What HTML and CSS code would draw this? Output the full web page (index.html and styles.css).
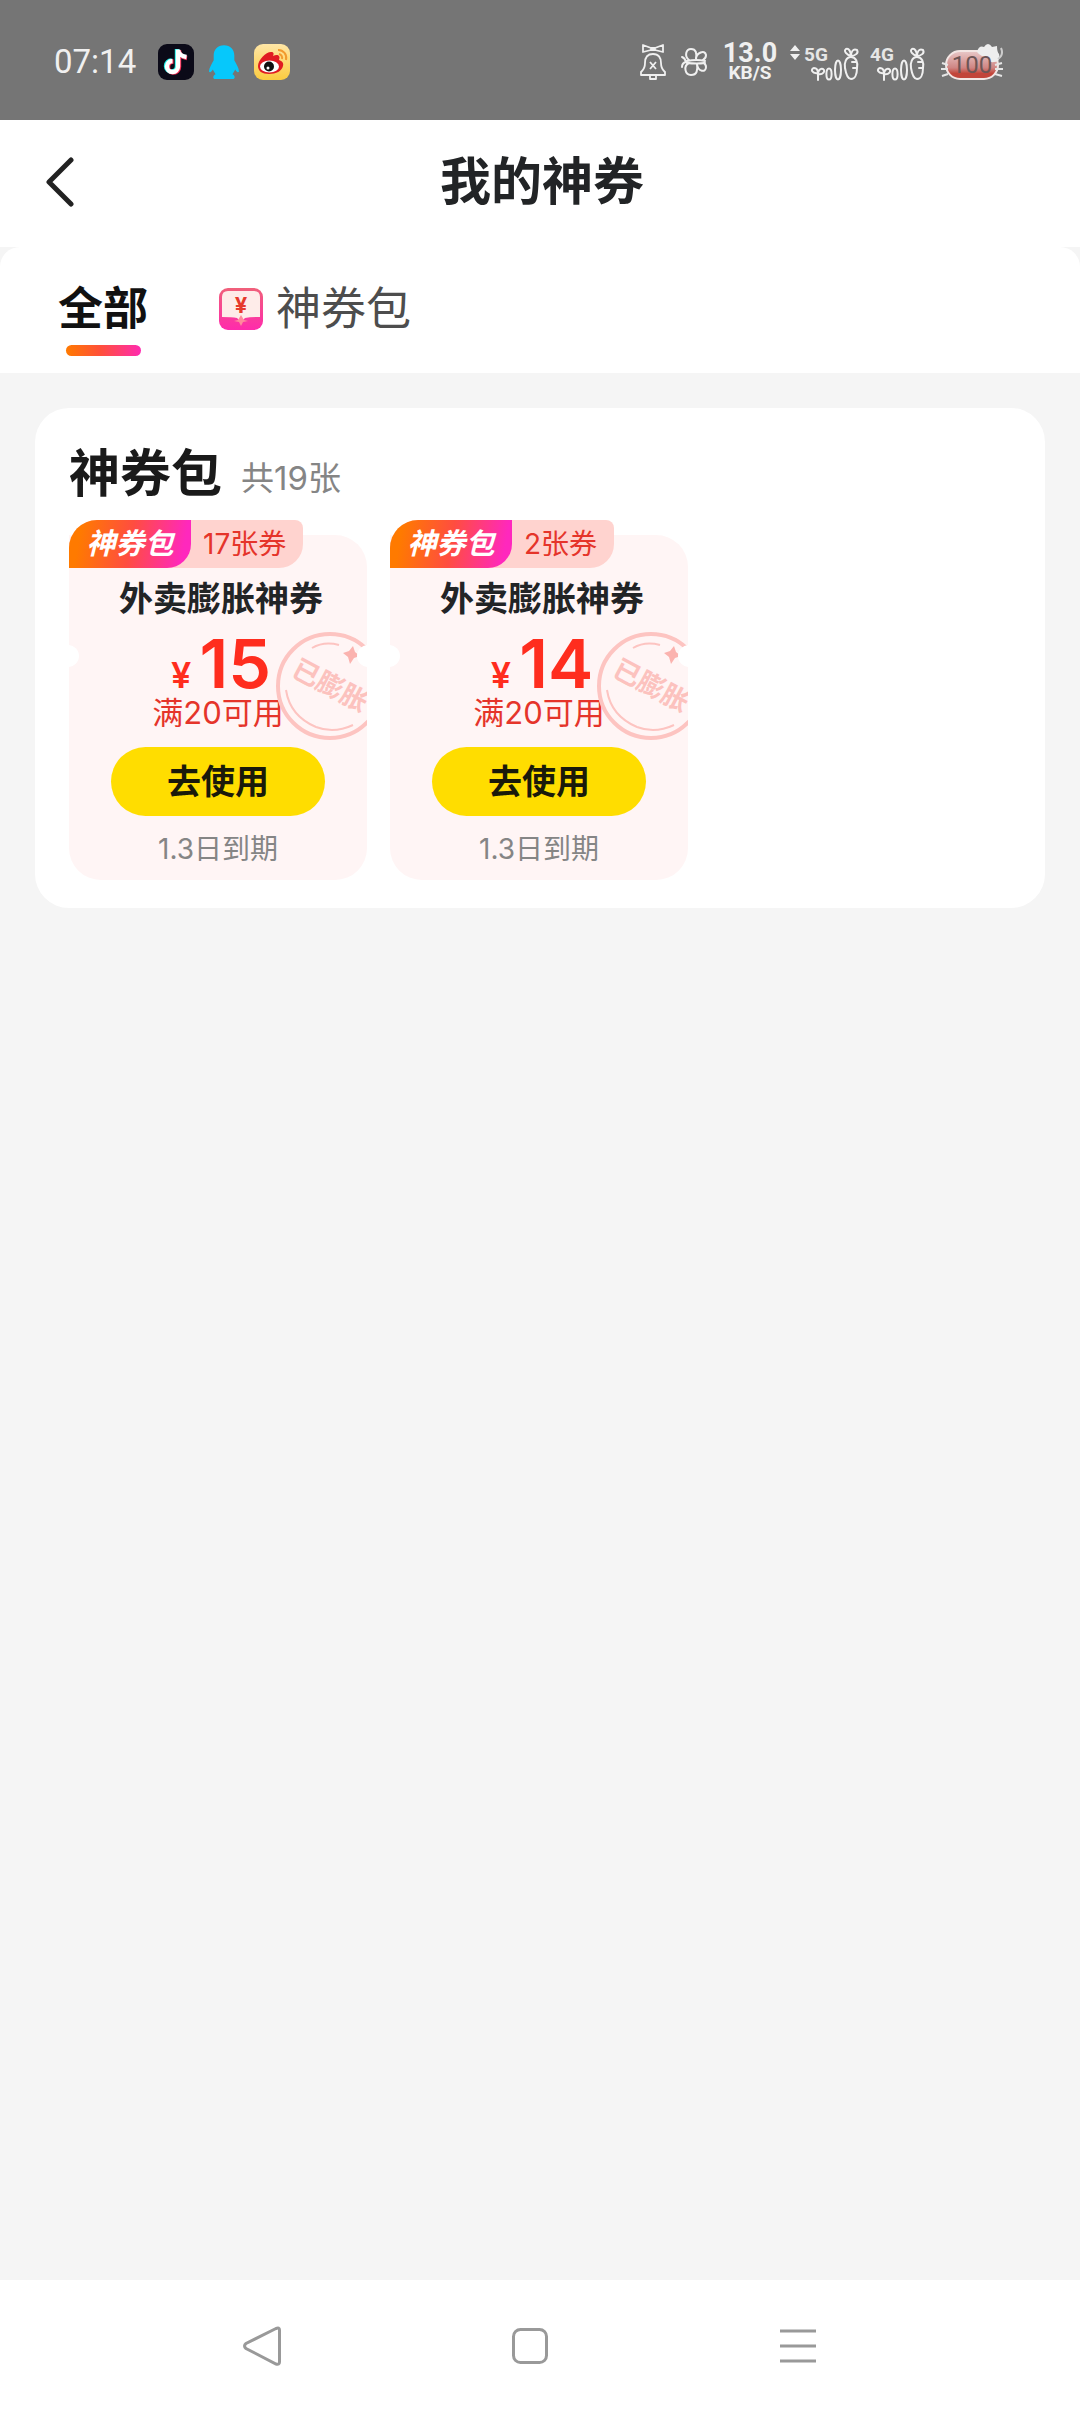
FILE: index.html
```html
<!DOCTYPE html>
<html lang="zh-CN">
<head>
<meta charset="utf-8">
<meta name="viewport" content="width=device-width, initial-scale=1">
<title>我的神券</title>
<link rel="stylesheet" href="styles.css">
</head>
<body>
<svg class="defs" width="0" height="0" aria-hidden="true">
  <defs>
    <g id="signal-bars" fill="none" stroke="#f0f0f0" stroke-width="2" stroke-linecap="round">
      <path d="M7 38V30M7 31c-6 1-8-4-4-5c3 0 4 3 4 6c0-3 2-6 5-5c3 2 0 6-5 5"/>
      <ellipse cx="18" cy="32" rx="2.6" ry="5.6"/>
      <ellipse cx="27" cy="28" rx="3" ry="9.5"/>
      <path d="M40 15c-5 0-7 6-6 11c1 6 3 11 6 11c4 0 6-5 6-11c1-6-1-11-6-11zM41 20h4M42 26h4"/>
      <path d="M40 14c-4-1-8-5-5-7c3-1 5 3 5 7c0-4 2-8 6-6c2 3-2 6-6 6"/>
    </g>
    <symbol id="stamp" viewBox="0 0 108 108">
      <g fill="none" stroke="#fdc4c1">
        <circle cx="54" cy="54" r="52" stroke-width="4"/>
        <path d="M36 16Q48 9 63 13" stroke-width="2"/>
        <path d="M10 58Q14 84 40 95Q58 102 77 93" stroke-width="2"/>
      </g>
      <path d="M77 14l2 6 5 4-6 2-4 6-2-7-5-4 6-2z" fill="#fbb3af"/>
      <text x="54" y="63" text-anchor="middle" transform="rotate(28 54 54)" font-size="27" font-weight="700" fill="#fcc2be">已膨胀</text>
    </symbol>
  </defs>
</svg>

<div class="status">
  <div class="status-left">
    <span class="clock">07:14</span>
    <svg class="app" viewBox="0 0 36 36" role="img" aria-label="抖音">
      <rect width="36" height="36" rx="9" fill="#0b0a18"/>
      <g fill="none" stroke-width="4.4">
        <path d="M19 5v17a5.500 5.500 0 1 1-5.500-5.500M19 6q1 6 8 7" stroke="#25f4ee"/>
        <path d="M21 6v17a5.500 5.500 0 1 1-5.500-5.500M21 7q1 6 8 7" stroke="#fe2c55"/>
        <path d="M20 5.500v17a5.500 5.500 0 1 1-5.500-5.500M20 6q1 6 8.500 7" stroke="#fff"/>
      </g>
    </svg>
    <svg class="qq" viewBox="0 0 32 36" role="img" aria-label="QQ">
      <path d="M16 0C9 0 5 5 5 11v5c-2 4-5 8-5 12c1 2 3 0 4-2l3 5c-3 1-3 5-1 5h20c2 0 2-4-1-5l3-5c1 2 3 4 4 2c0-4-3-8-5-12v-5C27 5 23 0 16 0z" fill="#06c8fb"/>
    </svg>
    <svg class="app" viewBox="0 0 36 36" role="img" aria-label="微博">
      <defs><linearGradient id="wb" x1="0" y1="0" x2="0" y2="1"><stop offset="0" stop-color="#ffe6a6"/><stop offset="1" stop-color="#fbcb3f"/></linearGradient></defs>
      <rect width="36" height="36" rx="9" fill="url(#wb)"/>
      <path d="M4 22c0-6 8-14 13-14c3 0 3 2 2 4c4-2 8-1 6 4c3 1 5 3 4 6c-1 5-7 8-14 8S4 27 4 22z" fill="#e01b22"/>
      <ellipse cx="15.500" cy="22.500" rx="9.500" ry="6" fill="#fff"/>
      <circle cx="15" cy="22.500" r="5" fill="#111"/><circle cx="14" cy="24" r="1.500" fill="#fff"/>
      <path d="M24 6a8 8 0 0 1 8 10M25 10a4 4 0 0 1 3 5" fill="none" stroke="#f29a2e" stroke-width="2"/>
    </svg>
  </div>
  <div class="status-right">
    <svg class="bell" viewBox="0 0 26 36" fill="none" stroke="#f0f0f0" stroke-width="1.800" stroke-linejoin="round" aria-hidden="true">
      <path d="M11 4L3 1v7l8-2h4l8 2V1l-8 3zM11 4v2M15 4v2"/>
      <path d="M13 10c-6 0-8 4-8 9c0 6-2 7-4 9v3h24v-3c-2-2-4-3-4-9c0-5-2-9-8-9z"/>
      <path d="M10 31v4h6v-4M10 18l6 7M16 18l-6 7"/>
    </svg>
    <svg class="fly" viewBox="0 0 26 28" fill="none" stroke="#f0f0f0" stroke-width="2" stroke-linecap="round" aria-hidden="true">
      <path d="M6 13q10-2 18 0M6 15q10 1 18 0M5 14q-1-4-4-5M5 14q-4 1-4 5"/>
      <path d="M8 12C3 8 5 1 10 1c5 0 6 4 5 10C15 5 24 1 25 7c0 3-1 4-3 5M8 15C2 18 4 27 10 27c6 0 7-5 6-11c1 8 9 9 9 3c0-2-1-3-2-4"/>
    </svg>
    <div class="speed"><span class="rate">13.0</span><span class="unit">KB/S</span></div>
    <svg class="sig5" viewBox="0 0 72 40" aria-hidden="true">
      <path d="M7 3l5 6H2zM7 18l5-6H2z" fill="#f0f0f0"/>
      <text class="net" x="16" y="19">5G</text>
      <use href="#signal-bars" x="23"/>
    </svg>
    <svg class="sig4" viewBox="0 0 56 40" aria-hidden="true">
      <text class="net" x="0" y="19">4G</text>
      <use href="#signal-bars" x="7"/>
    </svg>
    <svg class="battery" viewBox="0 0 62 38" role="img" aria-label="电量 100">
      <defs><linearGradient id="bt" x1="0" y1="0" x2="0" y2="1"><stop offset="0" stop-color="#e9c9c9"/><stop offset=".6" stop-color="#cf8583"/><stop offset=".8" stop-color="#c2453a"/></linearGradient></defs>
      <rect x="5" y="8" width="52" height="28" rx="14" fill="url(#bt)" stroke="#f3e6e4" stroke-width="2"/>
      <path d="M36 9q2-7 7-5q4-6 8 0l5-1q0 6 2 8q2 8-5 8q-6 1-7-5q-6 0-10-5z" fill="#eee"/>
      <path d="M57 16q6-4 3-11" fill="none" stroke="#ccc" stroke-width="2"/>
      <path d="M1 20l6 2M0 26h7M1 33l6-2M61 20l-7 2M62 26h-8M61 33l-7-2" stroke="#e6e6e6" stroke-width="2"/>
      <text class="level" x="31" y="30" text-anchor="middle">100</text>
    </svg>
  </div>
</div>

<header class="header">
  <button class="back" type="button" aria-label="返回">
    <svg viewBox="0 0 28 50" fill="none" stroke="#222" stroke-width="5" stroke-linecap="round" stroke-linejoin="round"><path d="M25 3L3 25l22 22"/></svg>
  </button>
  <h1 class="title">我的神券</h1>
</header>

<div class="tabs-wrap">
  <nav class="tabs">
    <button class="tab tab-on" type="button">全部</button>
    <button class="tab" type="button">
      <svg class="tab-icon" viewBox="0 0 44 42" aria-hidden="true">
        <defs><linearGradient id="tk" x1="0" y1="0" x2="0" y2="1"><stop offset="0" stop-color="#f0607a"/><stop offset="1" stop-color="#ff2bac"/></linearGradient></defs>
        <rect width="44" height="42" rx="9" fill="url(#tk)"/>
        <path d="M3 9q0-6 6-6h26q6 0 6 6v20q-10 0-15 1l-4 4-4-4q-5-1-15-1z" fill="#feece9"/>
        <path d="M22 27l3 5 4 1-5 1-2 4-2-4-5-1 4-1z" fill="#ff8b9c"/>
        <text x="22" y="25" text-anchor="middle" font-size="22" font-weight="700" fill="#e63a2c">¥</text>
      </svg>
      神券包
    </button>
  </nav>
</div>

<main class="main">
  <section class="card">
    <div class="card-head">
      <h2 class="card-title">神券包</h2>
      <span class="count">共19张</span>
    </div>
    <ul class="coupons">
      <li class="coupon">
        <div class="badge"><span class="badge-name">神券包</span><span class="badge-count">17张券</span></div>
        <div class="ticket">
          <svg class="stamp" role="img" aria-label="已膨胀"><use href="#stamp"/></svg>
          <h3 class="name">外卖膨胀神券</h3>
          <p class="price"><span class="yen">¥</span>15</p>
          <p class="rule">满20可用</p>
          <button class="use" type="button">去使用</button>
          <p class="expiry">1.3日到期</p>
        </div>
      </li>
      <li class="coupon">
        <div class="badge"><span class="badge-name">神券包</span><span class="badge-count">2张券</span></div>
        <div class="ticket">
          <svg class="stamp" role="img" aria-label="已膨胀"><use href="#stamp"/></svg>
          <h3 class="name">外卖膨胀神券</h3>
          <p class="price"><span class="yen">¥</span>14</p>
          <p class="rule">满20可用</p>
          <button class="use" type="button">去使用</button>
          <p class="expiry">1.3日到期</p>
        </div>
      </li>
    </ul>
  </section>
</main>

<nav class="sysnav">
  <button type="button" aria-label="返回"><svg viewBox="0 0 40 40"><path d="M34 2.500L4 17.500q-3 2.500 0 5L34 38q3.500 1 3.500-2V4q0-3-3.500-1.500z"/></svg></button>
  <button type="button" aria-label="主页"><svg viewBox="0 0 40 40"><rect x="3.500" y="3.500" width="33" height="33" rx="7"/></svg></button>
  <button type="button" aria-label="菜单"><svg viewBox="0 0 40 40"><path d="M2 5h36M2 20h36M2 35h36"/></svg></button>
</nav>
</body>
</html>
```
FILE: styles.css
```css
* { box-sizing: border-box; }

body {
  margin: 0;
  min-height: 100vh;
  display: flex;
  flex-direction: column;
  background: #f5f5f5;
  color: #1a1a1a;
  font-family: Inter, "Noto Sans CJK SC", sans-serif;
}

h1, h2, h3, p, ul { margin: 0; padding: 0; }
ul { list-style: none; }
svg { display: block; flex: none; }
.defs { position: absolute; }

button {
  padding: 0;
  border: 0;
  background: none;
  color: inherit;
  font: inherit;
  cursor: pointer;
}

/* Phone status bar */
.status {
  height: 120px;
  padding: 4px 77px 0 54px;
  display: flex;
  align-items: center;
  justify-content: space-between;
  background: #757575;
  color: #f0f0f0;
}
.status-left, .status-right { display: flex; align-items: center; }
.status-left { gap: 15px; }
.clock {
  width: 89px;
  font-family: Roboto, sans-serif;
  font-size: 33px;
  line-height: 40px;
}
.app { width: 36px; height: 36px; }
.qq { width: 30px; height: 36px; }
.bell { width: 26px; height: 36px; margin-right: 15px; }
.fly { width: 26px; height: 28px; margin-right: 15px; }
.speed {
  width: 56px;
  display: flex;
  flex-direction: column;
  align-items: center;
  margin-right: 10px;
  font-family: Roboto, sans-serif;
  font-weight: 700;
}
.rate { font-size: 27px; line-height: 22px; }
.unit { font-size: 19px; line-height: 18px; }
.sig5 { width: 72px; height: 40px; margin-right: 10px; }
.sig4 { width: 56px; height: 40px; margin-right: 15px; }
.battery { width: 62px; height: 38px; }
.net { font: 700 19px Roboto, sans-serif; fill: #e6e6e6; }
.level { font: 24px Roboto, sans-serif; fill: #6d5555; }

/* Page header */
.header {
  height: 127px;
  padding: 0 42px 4px 46px;
  display: grid;
  grid-template-columns: 1fr auto 1fr;
  align-items: center;
  background: #fff;
}
.back svg { width: 28px; height: 50px; }
.title { font-size: 51px; line-height: 68px; color: #222426; }

/* Tabs */
.tabs {
  padding: 28px 58px 17px;
  display: flex;
  align-items: flex-start;
  gap: 71px;
  background: #fff;
  border-radius: 20px 20px 0 0;
}
.tab {
  display: flex;
  align-items: center;
  gap: 13px;
  font-size: 45px;
  line-height: 68px;
  color: #4d4d4d;
}
.tab-on {
  flex-direction: column;
  gap: 2px;
  font-weight: 700;
  color: #111;
}
.tab-on::after {
  content: "";
  width: 75px;
  height: 11px;
  border-radius: 6px;
  background: linear-gradient(90deg, #ff7a00, #ff5038 45%, #ff2bb0);
}
.tab-icon { width: 44px; height: 42px; }

/* Coupon pack */
.main { flex: 1; padding: 35px; }
.card {
  padding: 32px 34px 28px;
  background: #fff;
  border-radius: 34px;
}
.card-head { display: flex; align-items: flex-end; gap: 19px; }
.card-title { font-size: 51px; line-height: 68px; }
.count { font-size: 33px; line-height: 60px; color: #858585; }
.coupons { display: flex; gap: 23px; padding-top: 27px; }
.coupon { position: relative; width: 298px; }

.badge {
  position: absolute;
  z-index: 1;
  top: -15px;
  left: 0;
  height: 48px;
  display: flex;
  background: #ffd3cf;
  border-radius: 28px 8px 24px 0;
  line-height: 48px;
}
.badge-name {
  width: 122px;
  text-align: center;
  border-radius: 28px 0 24px 0;
  background: linear-gradient(100deg, #ff7a00 10%, #ff4d40 50%, #ff28bd 92%);
  color: #fff;
  font-size: 29px;
  font-weight: 700;
  font-style: italic;
}
.badge-count { padding: 0 17px 0 12px; font-size: 28px; color: #e5342a; }

.ticket {
  position: relative;
  overflow: hidden;
  padding: 42px 0 15px;
  display: flex;
  flex-direction: column;
  align-items: center;
  background: #fff5f5;
  border-radius: 0 32px 32px 32px;
}
.ticket::before, .ticket::after {
  content: "";
  position: absolute;
  top: 110px;
  width: 22px;
  height: 22px;
  border-radius: 11px;
  background: #fff;
}
.ticket::before { left: -12px; }
.ticket::after { right: -12px; }
.stamp { position: absolute; top: 97px; left: 207px; width: 108px; height: 108px; }
.name, .price { padding-left: 6px; }
.name { font-size: 34px; line-height: 44px; color: #222426; }
.price {
  margin-top: 12px;
  font-size: 68px;
  font-weight: 600;
  line-height: 60px;
  color: #ff2d1e;
}
.yen { margin-right: 8px; font-size: 36px; line-height: 1; }
.rule { font-size: 31px; line-height: 40px; color: #e5342a; }
.use {
  width: 214px;
  margin-top: 14px;
  border-radius: 35px;
  background: #ffdd00;
  color: #1a1a0a;
  font-size: 34px;
  font-weight: 700;
  line-height: 69px;
}
.expiry { margin-top: 17px; font-size: 28px; line-height: 32px; color: #858585; }

/* System navigation */
.sysnav {
  height: 132px;
  padding: 0 148px 0 128px;
  display: grid;
  grid-template-columns: repeat(3, 1fr);
  align-items: center;
  background: #fff;
}
.sysnav button { display: flex; justify-content: center; }
.sysnav svg { width: 40px; height: 40px; fill: none; stroke: #999; stroke-width: 3; }
```
